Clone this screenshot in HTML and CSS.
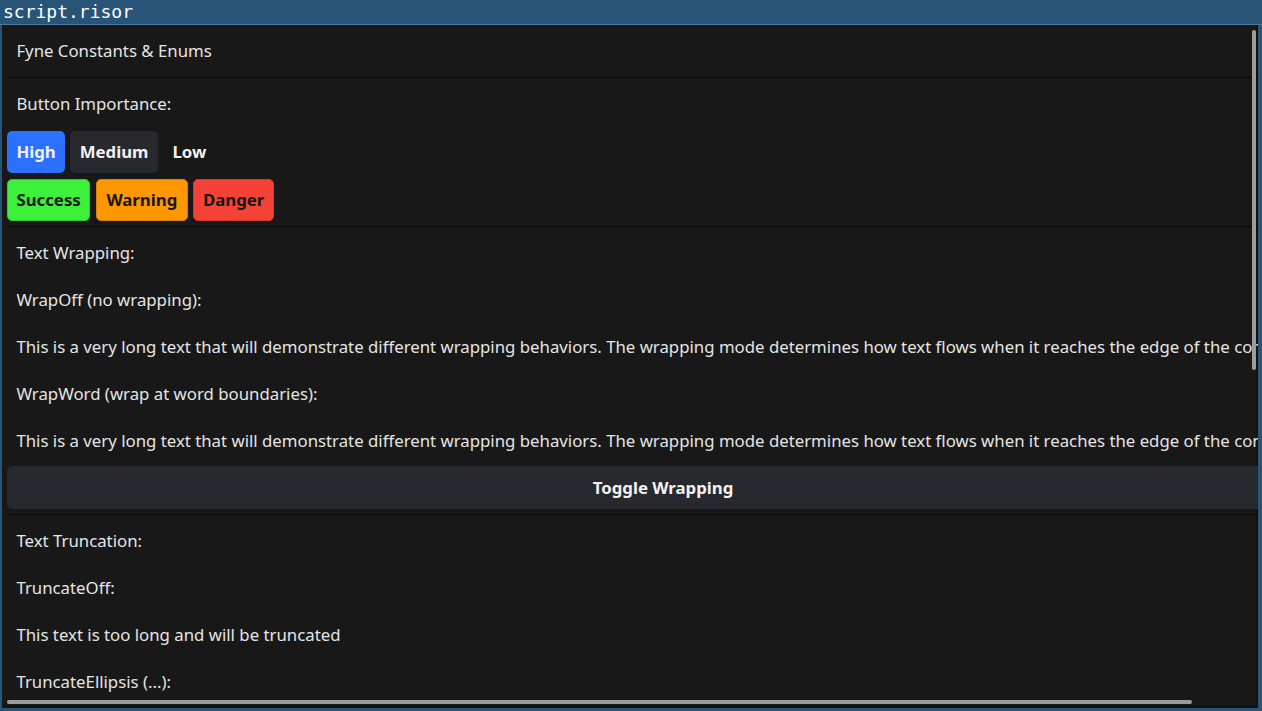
FILE: index.html
```html
<!DOCTYPE html>
<html lang="en">
<head>
    <meta charset="UTF-8">
    <meta name="viewport" content="width=device-width, initial-scale=1.0">
    <title>script.risor</title>
    <link rel="stylesheet" href="styles.css">
</head>
<body>
    <div class="window">
        <div class="titlebar">script.risor</div>
        <div class="frame">
            <div class="scroll">
                <div class="content">
                    <div class="label">Fyne Constants &amp; Enums</div>
                    <div class="separator"></div>
                    <div class="label">Button Importance:</div>
                    <div class="button-row first">
                        <div class="btn high">High</div>
                        <div class="btn medium">Medium</div>
                        <div class="btn low">Low</div>
                    </div>
                    <div class="button-row second">
                        <div class="btn success">Success</div>
                        <div class="btn warning">Warning</div>
                        <div class="btn danger">Danger</div>
                    </div>
                    <div class="separator"></div>
                    <div class="label">Text Wrapping:</div>
                    <div class="label">WrapOff (no wrapping):</div>
                    <div class="label">This is a very long text that will demonstrate different wrapping behaviors. The wrapping mode determines how text flows when it reaches the edge of the container.</div>
                    <div class="label">WrapWord (wrap at word boundaries):</div>
                    <div class="label">This is a very long text that will demonstrate different wrapping behaviors. The wrapping mode determines how text flows when it reaches the edge of the container.</div>
                    <div class="btn medium wide">Toggle Wrapping</div>
                    <div class="separator"></div>
                    <div class="label">Text Truncation:</div>
                    <div class="label">TruncateOff:</div>
                    <div class="label">This text is too long and will be truncated</div>
                    <div class="label">TruncateEllipsis (...):</div>
                    <div class="label">This text is too long and will be truncated</div>
                </div>
            </div>
            <div class="vbar"></div>
            <div class="hbar"></div>
        </div>
    </div>
</body>
</html>
```

FILE: styles.css
```css
* { box-sizing: border-box; }
body { margin: 0; background: #285478; font-family: "Noto Sans", sans-serif; color: #e4e4e4; }
.window { width: 1262px; height: 711px; display: flex; flex-direction: column; overflow: hidden; }
.titlebar { height: 25px; flex: none; padding-left: 3px; font-family: "DejaVu Sans Mono", monospace; font-size: 18px; line-height: 23px; color: #ffffff; border-bottom: 1px solid #4d7a9c; }
.frame { position: relative; flex: 1; margin: 0 4px 3px 2px; background: #181818; box-shadow: inset -2px -3px 0 #121212; overflow: hidden; }
.scroll { height: 100%; overflow: hidden; }
.content { width: 1322px; padding: 4.8px; display: flex; flex-direction: column; gap: 4.8px; }
.label { padding: 9.3px 9.6px 9.9px; font-size: 16.8px; line-height: 23px; white-space: nowrap; }
.separator { height: 1px; background: #050505; }
.button-row { display: flex; gap: 4.8px; }
.button-row.first { margin-top: 1px; }
.button-row.second { margin-top: 1.5px; gap: 5.5px; }
.btn { height: 42px; padding: 0 9.6px; border-radius: 5px; font-size: 16.8px; font-weight: bold; line-height: 42px; white-space: nowrap; color: #f2f2f2; }
.high { background: #2b70ff; }
.medium { background: #28292e; }
.low { background: transparent; }
.success { background: #3df03a; color: #161616; border: 1px solid #33c630; line-height: 40px; padding: 0 8.6px; }
.warning { background: #ff9800; color: #161616; border: 1px solid #d98200; line-height: 40px; }
.danger { background: #f44336; color: #161616; border: 1px solid #cf392e; line-height: 40px; padding: 0 8.6px; }
.wide { width: 100%; text-align: center; height: 43px; line-height: 43px; }
.vbar { position: absolute; left: 1250px; top: 5px; width: 4px; height: 340px; border-radius: 2px; background: #9c9c9c; }
.hbar { position: absolute; left: 5px; top: 675px; width: 1185px; height: 4px; border-radius: 2px; background: #9c9c9c; }
```
